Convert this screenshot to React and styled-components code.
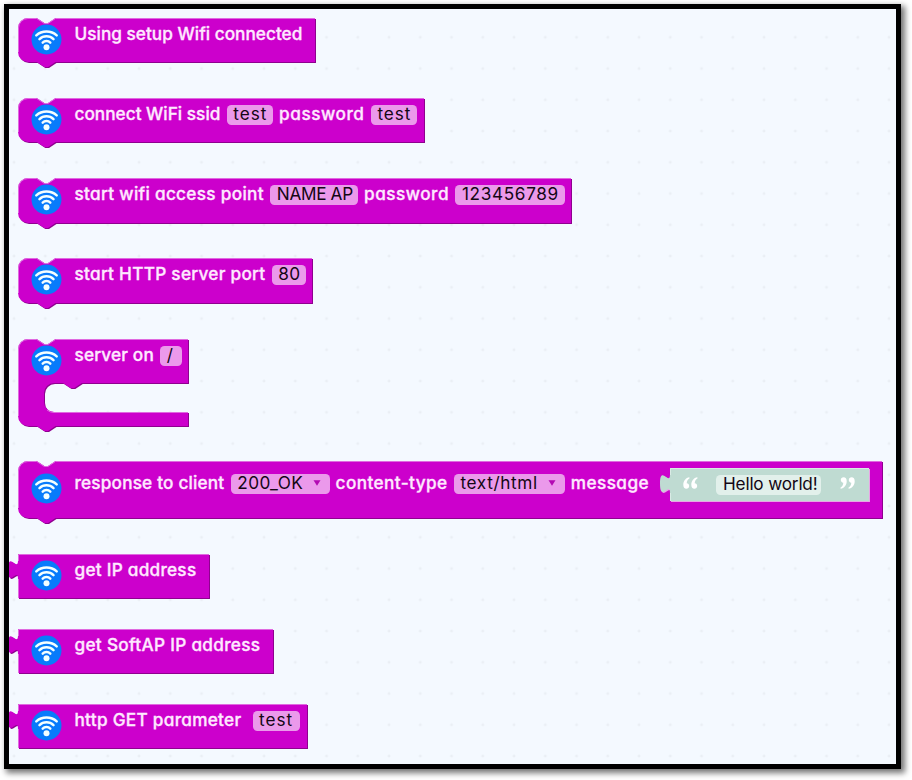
import React, { useLayoutEffect, useRef, useState } from "react";
import styled, { createGlobalStyle } from "styled-components";

const GlobalStyle = createGlobalStyle`
  * { box-sizing: border-box; }
  body { margin: 0; background: #ffffff; }
`;

const Page = styled.main`
  width: 912px;
  height: 780px;
  padding: 4px;
  overflow: hidden;
  font-family: "Inter", "Liberation Sans", sans-serif;
`;

const Workspace = styled.section`
  display: flex;
  flex-direction: column;
  align-items: flex-start;
  width: 897px;
  height: 765px;
  padding: 9px 0 0 9px;
  border: 5px solid #000;
  overflow: hidden;
  background-color: #f4f9ff;
  background-image: radial-gradient(circle, #e6eaf0 0, #ecf1f7 1px, transparent 2px);
  background-size: 31.25px 31.25px;
  background-position: -10.6px -18.6px;
  box-shadow: 3px 3px 6px 1px rgba(0, 0, 0, 0.55);
`;

const BlockBox = styled.div`
  position: relative;
  display: flex;
  align-items: flex-start;
  flex: none;
  width: ${(p) => p.$width}px;
  height: ${(p) => p.$height}px;
  margin-bottom: ${(p) => p.$after}px;
  padding-left: 13px;
  padding-top: ${(p) => p.$pad}px;
`;

const Outline = styled.svg`
  position: absolute;
  left: 0;
  top: 0;
  overflow: visible;
`;

const WifiBadge = styled.svg`
  position: relative;
  flex: none;
  width: 31px;
  height: 31px;
  margin-top: -1px;
  margin-right: 12.5px;
`;

const LabelBox = styled.span`
  position: relative;
  flex: none;
  width: ${(p) => p.$width}px;
  height: 20px;
  margin-right: ${(p) => p.$gap}px;
  color: #ffe9ff;
  font-size: 17.2px;
  font-weight: 500;
  line-height: 17px;
  -webkit-text-stroke: 0.35px #ffe9ff;
`;

const FieldBox = styled.span`
  position: relative;
  display: flex;
  align-items: center;
  flex: none;
  width: ${(p) => p.$width}px;
  height: 20px;
  margin-left: 0.5px;
  margin-right: 5.8px;
  padding: 0 0 2px 6.5px;
  border-radius: 4.5px;
  background: ${(p) => (p.$green ? "#e2f0eb" : "#eb99eb")};
  color: #140614;
  font-size: 17.2px;
  font-weight: 400;
  line-height: 18px;
`;

const Fitted = styled.span`
  display: inline-block;
  white-space: pre;
  font-feature-settings: "cv11", "calt" 0;
`;

const Caret = styled.svg`
  width: 8px;
  height: 6px;
  margin: 0 9px 0 auto;
`;

const ValueBlock = styled.div`
  position: relative;
  display: flex;
  align-items: flex-start;
  width: 200px;
  height: 34px;
  margin: -6px 0 0 15px;
  padding: 7px 0 0 13px;
`;

const QuoteMark = styled.svg`
  position: relative;
  flex: none;
  width: 15px;
  height: 12px;
  margin-top: 2px;
  margin-left: ${(p) => p.$before ?? 0}px;
  margin-right: ${(p) => p.$after ?? 0}px;
`;

/* Adjusts letter spacing so that the text spans the given width. */
function FitText({ width, children }) {
  const ref = useRef(null);
  const [spacing, setSpacing] = useState(0);
  useLayoutEffect(() => {
    const natural = ref.current.getBoundingClientRect().width;
    setSpacing((width - natural) / children.length);
  }, []);
  return (
    <Fitted ref={ref} style={{ letterSpacing: `${spacing}px` }}>
      {children}
    </Fitted>
  );
}

const Label = ({ width, gap = 6.3, children }) => (
  <LabelBox $width={width} $gap={gap}>
    <FitText width={width + 0.4}>{children}</FitText>
  </LabelBox>
);

const Field = ({ width, text, green, menu, children }) => (
  <FieldBox $width={width} $green={green}>
    <FitText width={text}>{children}</FitText>
    {menu && (
      <Caret viewBox="0 0 8 6">
        <path d="M.5.3h7L4 5.7z" fill="#b30ab3" />
      </Caret>
    )}
  </FieldBox>
);

const Wifi = () => (
  <WifiBadge viewBox="-15.5 -15.5 31 31">
    <circle r="15" fill="#087bfb" />
    <g fill="none" stroke="#f4ffff" strokeWidth="2.5" strokeLinecap="round">
      <path d="M-10.2-4.2C-4.6-9.3 4.6-9.3 10.2-4.2" />
      <path d="M-7-.4C-3.2-4.1 3.2-4.1 7-.4" />
      <path d="M-3.8 3.1C-1.8 1 1.8 1 3.8 3.1" />
    </g>
    <circle cy="7.7" r="3" fill="#f4ffff" />
  </WifiBadge>
);

/* Puzzle tab on the left edge of blocks that return a value. */
const TAB = "V25C0 12.5-10 35-10 15.6C-10-3.75 0 18.75 0 6.25V0Z";

function shapeFor(kind, w, h) {
  if (kind === "value") return `M0 0H${w}V${h}H0${TAB}`;
  const top = `M0 10A10 10 0 0 1 10 0H18.8L26.3 5H30L37.5 0H${w}`;
  const bottom = `V${h}H37.5L30 ${h + 5}H26.3L18.8 ${h}H10A10 10 0 0 1 0 ${h - 10}Z`;
  const mouth = "V44H63.8L56.3 49H52.5L45 44H36A10 10 0 0 0 26 54V63A10 10 0 0 0 36 73";
  return kind === "wrap" ? `${top}${mouth}H${w}${bottom}` : `${top}${bottom}`;
}

function BlockOutline({ kind, width, height, fill = "#cc00cc", dark = "#8f008f", light = "#e06ae0" }) {
  const w = width - 1;
  const h = height - 1;
  const d = shapeFor(kind, w, h);
  const edge =
    kind === "value"
      ? `M.5 ${h}V25M.5 7V.5H${w}`
      : `M.5 ${h - 10}V10A9.5 9.5 0 0 1 10 .5H18.8L26.3 5.5H30L37.5 .5H${w}`;
  return (
    <Outline width={width} height={height}>
      <path d={d} fill={dark} transform="translate(1 1)" />
      <path d={d} fill={fill} />
      <path d={edge} fill="none" stroke={light} />
      {kind === "wrap" && <path d={`M29 71Q32 73.5 36 73.5H${w}`} fill="none" stroke={light} />}
    </Outline>
  );
}

const Block = ({ kind = "stack", width, height = 45, after, pad = 7, children }) => (
  <BlockBox $width={width} $height={height} $after={after} $pad={pad}>
    <BlockOutline kind={kind} width={width} height={height} />
    <Wifi />
    {children}
  </BlockBox>
);

const QUOTE = "M6.3.2C3 .8.3 3.5.3 7.7c0 2.4 1.1 4 3.1 4 1.6 0 2.8-1.1 2.8-2.7 0-1.5-1-2.6-2.5-2.7.1-2.2 1.1-3.9 2.9-5z";

export default function App() {
  return (
    <>
      <GlobalStyle />
      <Page>
        <Workspace>
          <Block width={298} after={35}>
            <Label width={227.5}>Using setup Wifi connected</Label>
          </Block>
          <Block width={407} after={35}>
            <Label width={145.5}>connect WiFi ssid</Label>
            <Field width={46.5} text={34}>test</Field>
            <Label width={85}>password</Label>
            <Field width={46.5} text={34}>test</Field>
          </Block>
          <Block width={554} height={46} after={34}>
            <Label width={189}>start wifi access point</Label>
            <Field width={88} text={76}>NAME AP</Field>
            <Label width={84.5}>password</Label>
            <Field width={109.5} text={97}>123456789</Field>
          </Block>
          <Block width={295} height={46} after={35}>
            <Label width={190.5}>start HTTP server port</Label>
            <Field width={34} text={22}>80</Field>
          </Block>
          <Block kind="wrap" width={171} height={88} after={34} pad={6.5}>
            <Label width={79}>server on</Label>
            <Field width={22} text={8}>/</Field>
          </Block>
          <Block width={865} height={58} after={35} pad={13}>
            <Label width={149.5}>response to client</Label>
            <Field width={99} text={66} menu>200_OK</Field>
            <Label width={111.5}>content-type</Label>
            <Field width={111} text={77.5} menu>text/html</Field>
            <Label width={78}>message</Label>
            <ValueBlock>
              <BlockOutline kind="value" width={200} height={34} fill="#bfdbd2" dark="#e9a5e6" light="#d9ebe5" />
              <QuoteMark viewBox="0 0 15 12" $after={18}>
                <path d={QUOTE} fill="#fff" />
                <path d={QUOTE} fill="#fff" transform="translate(8 0)" />
              </QuoteMark>
              <Field width={105} text={94.5} green>Hello world!</Field>
              <QuoteMark viewBox="0 0 15 12" $before={12.5}>
                <g transform="rotate(180 7.5 6)" fill="#fff">
                  <path d={QUOTE} />
                  <path d={QUOTE} transform="translate(8 0)" />
                </g>
              </QuoteMark>
            </ValueBlock>
          </Block>
          <Block kind="value" width={192} after={30}>
            <Label width={121.5}>get IP address</Label>
          </Block>
          <Block kind="value" width={256} after={30}>
            <Label width={185.5}>get SoftAP IP address</Label>
          </Block>
          <Block kind="value" width={290} after={0} pad={6.5}>
            <Label width={166.5} gap={11}>http GET parameter</Label>
            <Field width={47} text={34}>test</Field>
          </Block>
        </Workspace>
      </Page>
    </>
  );
}
